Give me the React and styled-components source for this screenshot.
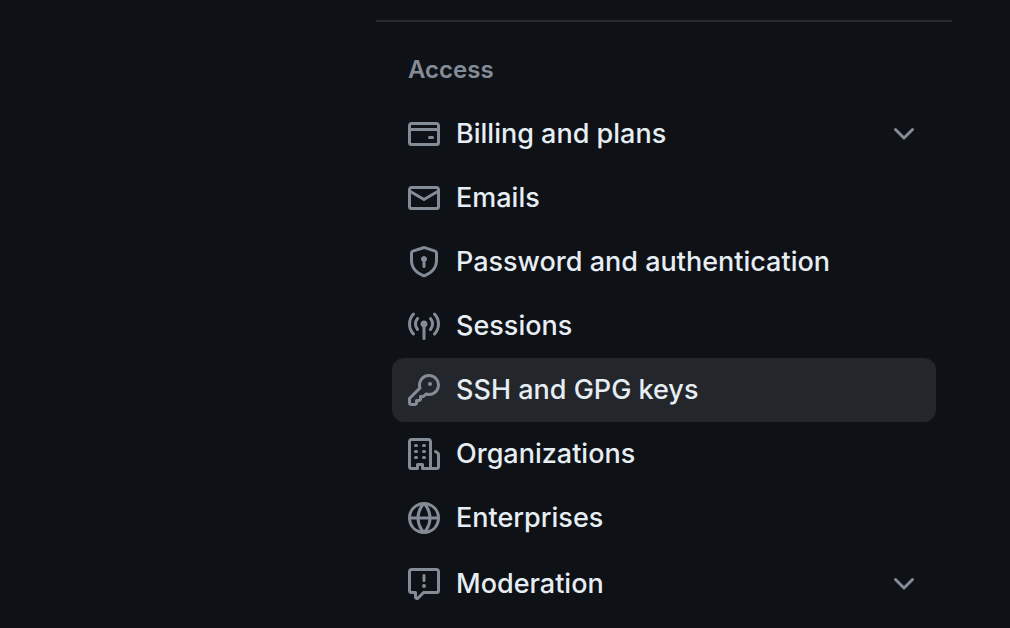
import { useState } from "react";
import styled, { createGlobalStyle } from "styled-components";

const icons = {
  card: "M10.75 9a.75.75 0 0 0 0 1.5h1.5a.75.75 0 0 0 0-1.5h-1.5ZM0 3.75C0 2.784.784 2 1.75 2h12.5c.966 0 1.75.784 1.75 1.75v8.5A1.75 1.75 0 0 1 14.25 14H1.75A1.75 1.75 0 0 1 0 12.25ZM14.5 6.5h-13v5.75c0 .138.112.25.25.25h12.5a.25.25 0 0 0 .25-.25Zm0-2.75a.25.25 0 0 0-.25-.25H1.75a.25.25 0 0 0-.25.25V5h13Z",
  mail: "M1.75 2h12.5c.966 0 1.75.784 1.75 1.75v8.5A1.75 1.75 0 0 1 14.25 14H1.75A1.75 1.75 0 0 1 0 12.25v-8.5C0 2.784.784 2 1.75 2ZM1.5 12.251c0 .138.112.25.25.25h12.5a.25.25 0 0 0 .25-.25V5.809L8.38 9.397a.75.75 0 0 1-.76 0L1.5 5.809v6.442Zm13-8.181v-.32a.25.25 0 0 0-.25-.25H1.75a.25.25 0 0 0-.25.25v.32L8 7.88Z",
  shield:
    "m8.533.133 5.25 1.68A1.75 1.75 0 0 1 15 3.48V7c0 1.566-.32 3.182-1.303 4.682-.983 1.498-2.585 2.813-5.032 3.855a1.697 1.697 0 0 1-1.33 0c-2.447-1.042-4.049-2.357-5.032-3.855C1.32 10.182 1 8.566 1 7V3.48a1.755 1.755 0 0 1 1.217-1.667l5.25-1.68a1.748 1.748 0 0 1 1.066 0Zm-.61 1.429.001.001-5.25 1.68a.251.251 0 0 0-.174.237V7c0 1.36.275 2.666 1.057 3.859.784 1.194 2.121 2.342 4.366 3.298a.196.196 0 0 0 .154 0c2.245-.957 3.582-2.103 4.366-3.297C13.225 9.666 13.5 8.358 13.5 7V3.48a.25.25 0 0 0-.174-.238l-5.25-1.68a.25.25 0 0 0-.153 0ZM9.5 6.5c0 .536-.286 1.032-.75 1.3v2.45a.75.75 0 0 1-1.5 0V7.8A1.5 1.5 0 1 1 9.5 6.5Z",
  broadcast:
    "M8.75 8.582v5.668a.75.75 0 0 1-1.5 0V8.582a1.75 1.75 0 1 1 1.5 0Zm3.983-7.125a.75.75 0 0 1 1.06.026A7.976 7.976 0 0 1 16 7c0 2.139-.84 4.083-2.207 5.517a.75.75 0 1 1-1.086-1.034A6.474 6.474 0 0 0 14.5 7a6.474 6.474 0 0 0-1.793-4.483.75.75 0 0 1 .026-1.06Zm-9.466 0c.3.286.312.76.026 1.06A6.474 6.474 0 0 0 1.5 7a6.47 6.47 0 0 0 1.793 4.483.75.75 0 0 1-1.086 1.034A7.973 7.973 0 0 1 0 7c0-2.139.84-4.083 2.207-5.517a.75.75 0 0 1 1.06-.026Zm8.556 2.321A4.988 4.988 0 0 1 13 7a4.988 4.988 0 0 1-1.177 3.222.75.75 0 1 1-1.146-.967A3.487 3.487 0 0 0 11.5 7c0-.86-.309-1.645-.823-2.255a.75.75 0 0 1 1.146-.967Zm-6.492.958A3.48 3.48 0 0 0 4.5 7a3.48 3.48 0 0 0 .823 2.255.75.75 0 0 1-1.146.967A4.981 4.981 0 0 1 3 7a4.982 4.982 0 0 1 1.188-3.236.75.75 0 1 1 1.143.972Z",
  key: "M10.5 0a5.499 5.499 0 1 1-1.288 10.848l-.932.932a.749.749 0 0 1-.53.22H7v.75a.749.749 0 0 1-.22.53l-.5.5a.749.749 0 0 1-.53.22H5v.75a.749.749 0 0 1-.22.53l-.5.5a.749.749 0 0 1-.53.22h-2A1.75 1.75 0 0 1 0 14.25v-2c0-.199.079-.389.22-.53l4.932-4.932A5.5 5.5 0 0 1 10.5 0Zm-4 5.5c-.001.431.069.86.205 1.269a.75.75 0 0 1-.181.768L1.5 12.56v1.69c0 .138.112.25.25.25h1.69l.06-.06v-1.19a.75.75 0 0 1 .75-.75h1.19l.06-.06v-1.19a.75.75 0 0 1 .75-.75h1.19l1.023-1.025a.75.75 0 0 1 .768-.18A4 4 0 1 0 6.5 5.5ZM11 6a1 1 0 1 1 0-2 1 1 0 0 1 0 2Z",
  building:
    "M1.75 16A1.75 1.75 0 0 1 0 14.25V1.75C0 .784.784 0 1.75 0h8.5C11.216 0 12 .784 12 1.75v12.5c0 .085-.006.168-.018.25h2.268a.25.25 0 0 0 .25-.25V8.285a.25.25 0 0 0-.111-.208l-1.055-.703a.749.749 0 1 1 .832-1.248l1.055.703c.487.325.779.871.779 1.456v5.965A1.75 1.75 0 0 1 14.25 16h-3.5a.766.766 0 0 1-.197-.026c-.099.017-.2.026-.303.026h-3a.75.75 0 0 1-.75-.75V14h-1v1.25a.75.75 0 0 1-.75.75Zm-.25-1.75c0 .138.112.25.25.25H4v-1.25a.75.75 0 0 1 .75-.75h2.5a.75.75 0 0 1 .75.75v1.25h2.25a.25.25 0 0 0 .25-.25V1.75a.25.25 0 0 0-.25-.25h-8.5a.25.25 0 0 0-.25.25ZM3.75 6h.5a.75.75 0 0 1 0 1.5h-.5a.75.75 0 0 1 0-1.5ZM3 3.75A.75.75 0 0 1 3.75 3h.5a.75.75 0 0 1 0 1.5h-.5A.75.75 0 0 1 3 3.75Zm4 3A.75.75 0 0 1 7.75 6h.5a.75.75 0 0 1 0 1.5h-.5A.75.75 0 0 1 7 6.75ZM7.75 3h.5a.75.75 0 0 1 0 1.5h-.5a.75.75 0 0 1 0-1.5ZM3 9.75A.75.75 0 0 1 3.75 9h.5a.75.75 0 0 1 0 1.5h-.5A.75.75 0 0 1 3 9.75ZM7.75 9h.5a.75.75 0 0 1 0 1.5h-.5a.75.75 0 0 1 0-1.5Z",
  globe:
    "M8 0a8 8 0 1 1 0 16A8 8 0 0 1 8 0ZM5.78 8.75a9.64 9.64 0 0 0 1.363 4.177c.255.426.542.832.857 1.215.245-.296.551-.705.857-1.215A9.64 9.64 0 0 0 10.22 8.75Zm4.44-1.5a9.64 9.64 0 0 0-1.363-4.177c-.307-.51-.612-.919-.857-1.215a9.927 9.927 0 0 0-.857 1.215A9.64 9.64 0 0 0 5.78 7.25Zm-5.944 1.5H1.543a6.507 6.507 0 0 0 4.666 5.5c-.123-.181-.24-.365-.352-.552-.715-1.192-1.437-2.874-1.581-4.948Zm-2.733-1.5h2.733c.144-2.074.866-3.756 1.58-4.948.12-.197.237-.381.353-.552a6.507 6.507 0 0 0-4.666 5.5Zm10.181 1.5c-.144 2.074-.866 3.756-1.58 4.948-.12.197-.237.381-.353.552a6.507 6.507 0 0 0 4.666-5.5Zm2.733-1.5a6.507 6.507 0 0 0-4.666-5.5c.123.181.24.365.353.552.714 1.192 1.436 2.874 1.58 4.948Z",
  report:
    "M0 1.75C0 .784.784 0 1.75 0h12.5C15.216 0 16 .784 16 1.75v9.5A1.75 1.75 0 0 1 14.25 13H8.06l-2.573 2.573A1.458 1.458 0 0 1 3 14.543V13H1.75A1.75 1.75 0 0 1 0 11.25Zm1.75-.25a.25.25 0 0 0-.25.25v9.5c0 .138.112.25.25.25h2a.75.75 0 0 1 .75.75v2.19l2.72-2.72a.749.749 0 0 1 .53-.22h6.5a.25.25 0 0 0 .25-.25v-9.5a.25.25 0 0 0-.25-.25Zm7 2.25v2.5a.75.75 0 0 1-1.5 0v-2.5a.75.75 0 0 1 1.5 0ZM9 9a1 1 0 1 1-2 0 1 1 0 0 1 2 0Z",
  chevron:
    "M12.78 5.22a.749.749 0 0 1 0 1.06l-4.25 4.25a.749.749 0 0 1-1.06 0L3.22 6.28a.749.749 0 1 1 1.06-1.06L8 8.939l3.72-3.719a.749.749 0 0 1 1.06 0Z",
};

const items = [
  { id: "billing", label: "Billing and plans", icon: "card", expandable: true },
  { id: "emails", label: "Emails", icon: "mail" },
  { id: "security", label: "Password and authentication", icon: "shield" },
  { id: "sessions", label: "Sessions", icon: "broadcast" },
  { id: "keys", label: "SSH and GPG keys", icon: "key" },
  { id: "organizations", label: "Organizations", icon: "building" },
  { id: "enterprises", label: "Enterprises", icon: "globe" },
  { id: "moderation", label: "Moderation", icon: "report", expandable: true },
];

const Icon = ({ name, open }) => (
  <IconSvg viewBox="0 0 16 16" aria-hidden="true" $open={open}>
    <path fillRule="evenodd" d={icons[name]} />
  </IconSvg>
);

const App = () => {
  const [current, setCurrent] = useState("keys");
  const [opened, setOpened] = useState({});

  const toggle = (id) => {
    setOpened({ ...opened, [id]: !opened[id] });
  };

  return (
    <>
      <GlobalStyle />
      <Page>
        <Sidebar aria-labelledby="access-heading">
          <Heading id="access-heading">Access</Heading>
          <NavList>
            {items.map(({ id, label, icon, expandable }) => (
              <NavItem key={id} $expandable={expandable}>
                {expandable ? (
                  <NavButton
                    type="button"
                    aria-expanded={!!opened[id]}
                    onClick={() => toggle(id)}
                  >
                    <Icon name={icon} />
                    <Label>{label}</Label>
                    <Icon name="chevron" open={opened[id]} />
                  </NavButton>
                ) : (
                  <NavLink
                    href={`#${id}`}
                    aria-current={current === id ? "page" : undefined}
                    $active={current === id}
                    onClick={() => setCurrent(id)}
                  >
                    <Icon name={icon} />
                    <Label>{label}</Label>
                  </NavLink>
                )}
              </NavItem>
            ))}
          </NavList>
        </Sidebar>
      </Page>
    </>
  );
};

const GlobalStyle = createGlobalStyle`
  * {
    box-sizing: border-box;
  }

  body {
    margin: 0;
    background: #0e1116;
    color: #e6edf3;
    font-family: Inter, "Liberation Sans", sans-serif;
  }
`;

const Page = styled.main`
  padding: 20px 58px 0 376px;
`;

const Sidebar = styled.nav`
  border-top: 2px solid #272b30;
  padding: 30px 16px 0;
`;

const Heading = styled.h2`
  margin: 0;
  padding: 0 16px;
  color: #848d97;
  font-size: 24px;
  font-weight: 600;
  line-height: 36px;
`;

const NavList = styled.ul`
  list-style: none;
  margin: 0;
  padding: 12px 0 0;
`;

const NavItem = styled.li`
  padding-top: ${({ $expandable }) => ($expandable ? "2px" : "0")};
`;

const NavLink = styled.a`
  display: flex;
  align-items: center;
  gap: 16px;
  width: 100%;
  padding: 12px 16px;
  border: 0;
  border-radius: 12px;
  background: ${({ $active }) => ($active ? "#23262a" : "transparent")};
  color: inherit;
  font-family: inherit;
  font-size: 27px;
  font-weight: 500;
  line-height: 40px;
  text-align: left;
  text-decoration: none;
  cursor: pointer;

  &:hover {
    background: #1b1f24;
  }
`;

const NavButton = styled(NavLink).attrs({ as: "button" })``;

const Label = styled.span`
  flex: 1;
`;

const IconSvg = styled.svg`
  flex: none;
  width: 32px;
  height: 32px;
  fill: #848d97;
  transform: ${({ $open }) => ($open ? "rotate(180deg)" : "none")};
`;

export default App;
